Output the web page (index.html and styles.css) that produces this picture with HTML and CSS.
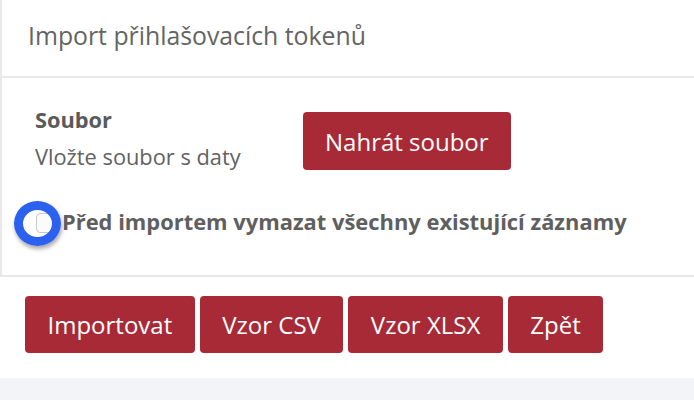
FILE: index.html
```html
<!DOCTYPE html>
<html lang="cs">
<head>
<meta charset="utf-8">
<link rel="stylesheet" href="styles.css">
</head>
<body>
<div class="card">
  <div class="card-header">Import přihlašovacích tokenů</div>
  <div class="card-body">
    <div class="file-row">
      <div class="file-label">
        <div class="label-title">Soubor</div>
        <div class="label-hint">Vložte soubor s daty</div>
      </div>
      <button class="btn btn-upload">Nahrát soubor</button>
    </div>
    <label class="check-row">
      <span class="check-wrap">
        <span class="checkbox"></span>
        <span class="focus-ring"></span>
      </span>
      <span class="check-text">Před importem vymazat všechny existující záznamy</span>
    </label>
  </div>
</div>
<div class="actions">
  <button class="btn">Importovat</button>
  <button class="btn">Vzor CSV</button>
  <button class="btn">Vzor XLSX</button>
  <button class="btn">Zpět</button>
</div>
<div class="footer"></div>
</body>
</html>
```
FILE: styles.css
```css
html, body {
  margin: 0;
  padding: 0;
  background: #ffffff;
  font-family: "Open Sans", "Noto Sans", sans-serif;
}
.card {
  border-left: 2px solid #e9e9ea;
  border-bottom: 2px solid #e9e9ea;
}
.card-header {
  height: 78px;
  box-sizing: border-box;
  border-bottom: 2px solid #e9e9ea;
  padding-left: 26px;
  padding-bottom: 6px;
  display: flex;
  align-items: center;
  font-size: 24.8px;
  color: #646464;
}
.card-body {
  height: 197px;
  box-sizing: border-box;
  padding: 27px 0 0 33px;
}
.file-row {
  display: flex;
  align-items: flex-start;
  height: 67px;
}
.file-label {
  width: 268px;
}
.label-title {
  font-size: 21.8px;
  font-weight: 700;
  color: #5a5a5a;
  line-height: 30px;
}
.label-hint {
  font-size: 21.8px;
  color: #626262;
  line-height: 30px;
  margin-top: 7px;
}
.btn {
  font-family: "Open Sans", "Noto Sans", sans-serif;
  font-size: 24px;
  color: #ffffff;
  background: #a92a37;
  border: none;
  border-radius: 4px;
  padding: 0 23px;
  height: 57px;
  cursor: pointer;
}
.btn-upload {
  margin-top: 7px;
  height: 58px;
  padding: 0 22px;
}
.check-row {
  display: flex;
  align-items: center;
  height: 30px;
  margin-top: 34px;
  margin-left: -5px;
}
.check-wrap {
  position: relative;
  width: 27px;
  height: 26px;
  margin-right: 5px;
}
.checkbox {
  position: absolute;
  left: 6px;
  top: 5px;
  width: 20px;
  height: 20px;
  box-sizing: border-box;
  border: 1px solid #c9c9c9;
  border-radius: 4px;
  background: #fbfbfb;
}
.focus-ring {
  position: absolute;
  left: -16px;
  top: -7px;
  width: 47px;
  height: 45px;
  box-sizing: border-box;
  border: 9.5px solid #2b61ee;
  border-radius: 50%;
  box-shadow: 1px 3px 4px rgba(0,0,0,0.35);
}
.check-text {
  font-size: 21.9px;
  font-weight: 700;
  color: #5f5f60;
}
.actions {
  display: flex;
  gap: 5px;
  padding: 19px 0 25px 25px;
}
.actions .btn {
  padding: 0 22.5px;
}
.footer {
  height: 22px;
  background: #f3f4f8;
}
```
